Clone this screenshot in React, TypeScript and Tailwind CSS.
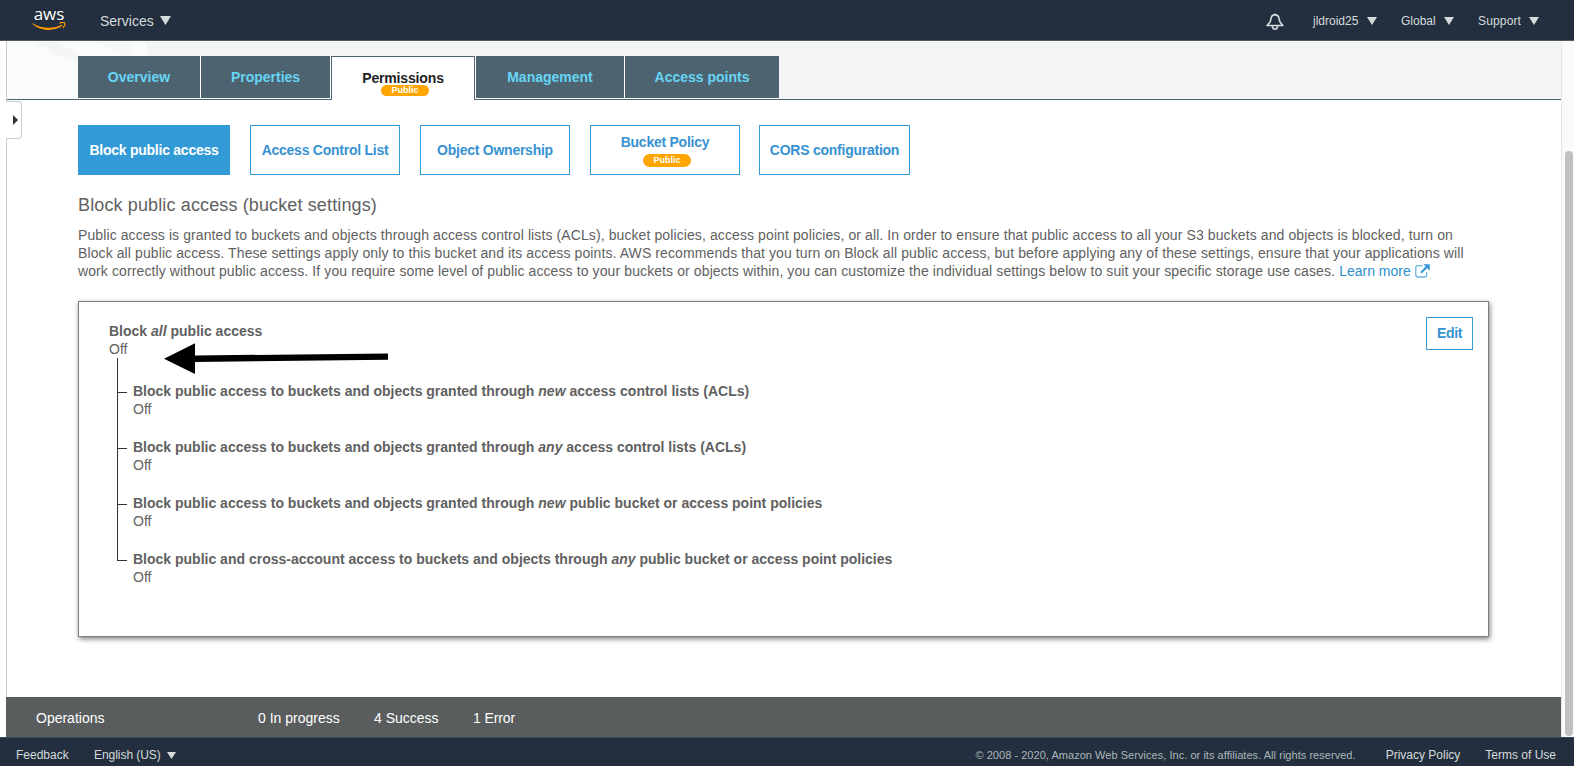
import React from "react";

function Caret({ className }: { className: string }) {
  return (
    <svg viewBox="0 0 10 9" preserveAspectRatio="none" className={className}>
      <path d="M0 0H10L5 9Z" fill="#d5dbdb" />
    </svg>
  );
}

function AwsLogo() {
  return (
    <div className="flex w-[34px] flex-col items-center">
      <span className="-mt-[2px] h-[16px] font-['Open_Sans','Noto_Sans',sans-serif] text-[17px] leading-[15px] font-medium text-white">
        aws
      </span>
      <svg viewBox="0 0 34 10" className="h-[10px] w-[34px]" fill="none">
        <path d="M0.6 1.2C9 6.8 22 7.300 29.6 2.800L30.6 3.800C22 9.800 8 9.400 0.300 1.700Z" fill="#f90" />
        <path d="M27.300 1.300C29.500 0.300 32 0.400 32.600 0.900C33.200 1.700 32.600 4 31 5.800" stroke="#f90" strokeWidth="1.200" />
      </svg>
    </div>
  );
}

function Bell() {
  return (
    <svg viewBox="0 0 18 18" className="mt-[3px] h-[18px] w-[18px]" fill="none" stroke="#d5dbdb" strokeWidth="1.600" strokeLinejoin="round">
      <path d="M9 1.900C6.600 1.900 5.100 3.600 4.900 6C4.700 9 3.600 10.200 1 12.500H17C14.400 10.200 13.300 9 13.100 6C12.900 3.600 11.400 1.900 9 1.900Z" />
      <path d="M9 0.500V2" />
      <path d="M6.400 12.800C6.400 17.400 11.600 17.400 11.600 12.800" />
    </svg>
  );
}

function TopNav() {
  return (
    <header className="flex h-[41px] shrink-0 items-center border-b border-[#545b64] bg-[#232f3e] pl-[32px] text-[#d5dbdb]">
      <AwsLogo />
      <span className="ml-[34px] pt-[2px] text-[14px] leading-[18px]">Services</span>
      <Caret className="ml-[6px] h-[9px] w-[11px]" />
      <div className="ml-auto flex items-center pr-[35px] text-[12px] leading-[16px]">
        <Bell />
        <span className="ml-[29px] w-[54px] pt-[2px]">jldroid25</span>
        <Caret className="mt-[2px] h-[8px] w-[10px]" />
        <span className="ml-[24px] w-[43px] pt-[2px]">Global</span>
        <Caret className="mt-[2px] h-[8px] w-[10px]" />
        <span className="ml-[24px] w-[51px] pt-[2px] tracking-[0.15px]">Support</span>
        <Caret className="mt-[2px] h-[8px] w-[10px]" />
      </div>
    </header>
  );
}

function Tab({ label, width }: { label: string; width: string }) {
  return (
    <div className={`flex h-[42px] items-center justify-center bg-[#4d6470] text-[14px] font-bold text-[#67d5f5] ${width}`}>
      {label}
    </div>
  );
}

function Tabs() {
  return (
    <div className="relative flex h-[59px] shrink-0 border-b border-[#4d6470] bg-[#f4f6f6] pt-[15px] pl-[71px]">
      <svg viewBox="0 0 145 58" className="absolute top-0 left-0 h-[58px] w-[145px]">
        <path d="M0 0H137C141 5 141.500 10 140 15V58H0Z" fill="#fafcfb" />
        <path d="M28 0H52C60 7 66 11 74 14V23C58 18 42 12 28 0Z" fill="#f4f6f6" />
        <path d="M85 0H123C128 5 128 11 123 15H113C118 12 116 10 109 10Z" fill="#f6f8f8" />
      </svg>
      <div className="relative flex h-[43px] gap-px bg-white">
        <Tab label="Overview" width="w-[122px]" />
        <Tab label="Properties" width="w-[129px]" />
        <div className="flex h-[44px] w-[144px] flex-col items-center border-x border-t border-[#4d6470] bg-white pt-[13px]">
          <span className="text-[14px] leading-[16px] font-bold tracking-[-0.15px] text-[#222]">Permissions</span>
          <span className="-mt-px ml-[4px] flex h-[11px] w-[48px] shrink-0 items-center justify-center rounded-full bg-[#ffa500] text-[9px] leading-[11px] font-bold text-white">
            Public
          </span>
        </div>
        <Tab label="Management" width="w-[148px]" />
        <Tab label="Access points" width="w-[154px]" />
      </div>
    </div>
  );
}

function SubTab({ children, className }: { children: React.ReactNode; className: string }) {
  return (
    <div className={`flex h-[50px] flex-col items-center justify-center border border-[#329ad6] text-[14px] leading-[18px] font-bold tracking-[-0.25px] ${className}`}>
      {children}
    </div>
  );
}

function SubTabs() {
  return (
    <div className="flex">
      <SubTab className="w-[152px] bg-[#329ad6] text-white">Block public access</SubTab>
      <SubTab className="ml-[20px] w-[150px] text-[#3792d2]">Access Control List</SubTab>
      <SubTab className="ml-[20px] w-[150px] text-[#3792d2]">Object Ownership</SubTab>
      <SubTab className="ml-[20px] w-[150px] text-[#3792d2]">
        <span className="-mt-px">Bucket Policy</span>
        <span className="mt-[3px] ml-[4px] flex h-[13px] w-[48px] items-center justify-center rounded-full bg-[#ffa500] text-[9px] leading-[13px] tracking-normal text-white">
          Public
        </span>
      </SubTab>
      <SubTab className="ml-[19px] w-[151px] text-[#3792d2]">CORS configuration</SubTab>
    </div>
  );
}

function ExternalIcon() {
  return (
    <svg viewBox="0 0 15 14" className="ml-[4px] inline-block h-[14px] w-[15px] align-[-2px]" fill="none">
      <path d="M7.500 1.700H2.500Q0.800 1.700 0.800 3.400V11.300Q0.800 13 2.500 13H10Q11.700 13 11.700 11.300V8" stroke="#68b4e2" strokeWidth="1.300" />
      <path d="M6 8.700L12 2.700" stroke="#329ad6" strokeWidth="2.200" />
      <path d="M8.300 0.300H14.700V6.700Z" fill="#329ad6" />
    </svg>
  );
}

const settings: [string, string, string][] = [
  ["Block public access to buckets and objects granted through", "new", "access control lists (ACLs)"],
  ["Block public access to buckets and objects granted through", "any", "access control lists (ACLs)"],
  ["Block public access to buckets and objects granted through", "new", "public bucket or access point policies"],
  ["Block public and cross-account access to buckets and objects through", "any", "public bucket or access point policies"],
];

function SettingsPanel() {
  return (
    <section className="relative mt-[21px] h-[336px] w-[1411px] border border-[#7d7d7d] bg-white pt-[20px] pl-[30px] text-[14px] leading-[18px] shadow-[1px_2px_5px_rgba(0,0,0,0.5)]">
      <div className="font-bold">
        Block <em>all</em> public access
      </div>
      <div>Off</div>
      <ul className="pl-[8px]">
        {settings.map(([before, word, after], i) => (
          <li key={i} className={i === 0 ? "flex h-[58px]" : "flex h-[56px]"}>
            <div className={i === 0 ? "h-[35px] w-[10px] border-b border-l border-[#333]" : "-mt-[23px] h-[56px] w-[10px] border-b border-l border-[#333]"} />
            <div className={i === 0 ? "mt-[24px] ml-[6px]" : "mt-[22px] ml-[6px]"}>
              <div className="font-bold">
                {before} <em>{word}</em> {after}
              </div>
              <div>Off</div>
            </div>
          </li>
        ))}
      </ul>
      <button className="absolute top-[15px] right-[15px] h-[33px] w-[47px] border border-[#329ad6] pb-[2px] text-[14px] font-bold tracking-[-0.4px] text-[#3792d2]">
        Edit
      </button>
      <svg viewBox="0 0 230 36" className="absolute top-[38px] left-[83px] h-[36px] w-[230px]">
        <path d="M2 18.800L33 3.300V15.500L226 13.500V19.800L33 22V34Z" fill="#000" />
      </svg>
    </section>
  );
}

function Operations() {
  return (
    <div className="mt-auto flex h-[40px] shrink-0 items-center bg-[#595d5d] pt-[2px] pl-[30px] text-[14px] text-white">
      <span className="w-[222px]">Operations</span>
      <span className="w-[116px]">0 In progress</span>
      <span className="w-[99px]">4 Success</span>
      <span className="tracking-[-0.1px]">1 Error</span>
    </div>
  );
}

function Footer() {
  return (
    <footer className="flex h-[29px] shrink-0 items-center border-t border-[#37475a] bg-[#232f3e] pt-[7px] pr-[18px] pb-px pl-[16px] text-[12px] leading-[16px] text-[#d5dbdb]">
      <span className="w-[78px]">Feedback</span>
      <span className="w-[73px] tracking-[-0.05px]">English (US)</span>
      <Caret className="mt-px h-[7px] w-[9px]" />
      <span className="ml-auto text-[11px] tracking-[0.04px] text-[#aab7b8]">
        © 2008 - 2020, Amazon Web Services, Inc. or its affiliates. All rights reserved.
      </span>
      <span className="ml-[30px]">Privacy Policy</span>
      <span className="ml-[25px]">Terms of Use</span>
    </footer>
  );
}

export default function App() {
  return (
    <div className="flex h-[766px] w-[1574px] flex-col overflow-hidden bg-white font-['Liberation_Sans',Arial,sans-serif] text-[#5f6161]">
      <TopNav />
      <div className="flex h-[696px]">
        <main className="relative ml-[6px] flex w-[1555px] flex-col">
          <div className="flex h-[656px] flex-col border-l border-[#ccc]">
            <Tabs />
            <div className="pt-[25px] pl-[71px]">
              <SubTabs />
              <h1 className="mt-[19px] text-[18px] leading-[22px] tracking-[0.13px]">Block public access (bucket settings)</h1>
              <p className="mt-[10px] text-[14px] leading-[18px] tracking-[0.1px] whitespace-nowrap">
                Public access is granted to buckets and objects through access control lists (ACLs), bucket policies, access point policies, or all. In order to ensure that public access to all your S3 buckets and objects is blocked, turn on
                <br />
                Block all public access. These settings apply only to this bucket and its access points. AWS recommends that you turn on Block all public access, but before applying any of these settings, ensure that your applications will
                <br />
                <span className="tracking-[0.105px]">
                  work correctly without public access. If you require some level of public access to your buckets or objects within, you can customize the individual settings below to suit your specific storage use cases.{" "}
                </span>
                <a className="tracking-normal text-[#2e8fd0]">
                  Learn more
                  <ExternalIcon />
                </a>
              </p>
              <SettingsPanel />
            </div>
          </div>
          <div className="absolute top-[60px] left-0 flex h-[38px] w-[16px] items-center rounded-r-[4px] border-y border-r border-[#ccc] bg-white pl-[7px]">
            <svg viewBox="0 0 5 10" className="h-[10px] w-[5px]">
              <path d="M0 0L5 5L0 10Z" fill="#333" />
            </svg>
          </div>
          <Operations />
        </main>
        <div className="flex w-[13px] flex-col border-l border-[#e6e6e6] bg-[#fafafa] pt-[110px] pl-[3px]">
          <div className="h-[585px] w-[8px] rounded-full bg-[#c1c1c1]" />
        </div>
      </div>
      <Footer />
    </div>
  );
}
